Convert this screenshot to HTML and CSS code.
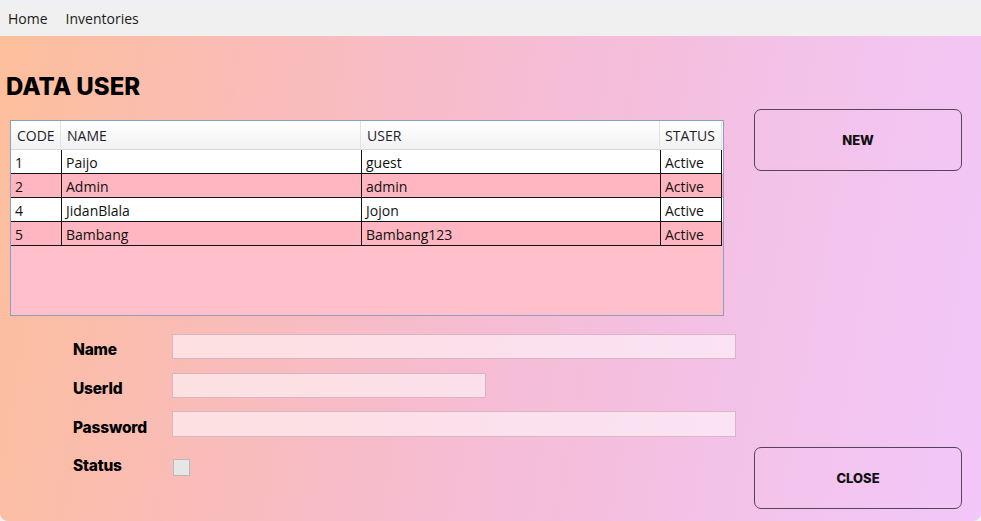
FILE: index.html
```html
<!DOCTYPE html>
<html>
<head>
<meta charset="utf-8">
<link rel="stylesheet" href="styles.css">
</head>
<body>
<div class="app">
  <nav class="menubar">
    <span class="menu-item">Home</span>
    <span class="menu-item">Inventories</span>
  </nav>
  <main class="window">
    <section class="left">
      <h1 class="title">DATA USER</h1>
      <div class="grid">
        <div class="grid-row header">
          <div class="cell c-code">CODE</div>
          <div class="cell c-name">NAME</div>
          <div class="cell c-user">USER</div>
          <div class="cell c-status">STATUS</div>
        </div>
        <div class="grid-row data">
          <div class="cell c-code">1</div>
          <div class="cell c-name">Paijo</div>
          <div class="cell c-user">guest</div>
          <div class="cell c-status">Active</div>
        </div>
        <div class="grid-row data alt">
          <div class="cell c-code">2</div>
          <div class="cell c-name">Admin</div>
          <div class="cell c-user">admin</div>
          <div class="cell c-status">Active</div>
        </div>
        <div class="grid-row data">
          <div class="cell c-code">4</div>
          <div class="cell c-name">JidanBlala</div>
          <div class="cell c-user">Jojon</div>
          <div class="cell c-status">Active</div>
        </div>
        <div class="grid-row data alt">
          <div class="cell c-code">5</div>
          <div class="cell c-name">Bambang</div>
          <div class="cell c-user">Bambang123</div>
          <div class="cell c-status">Active</div>
        </div>
      </div>
      <form class="form">
        <label class="label">Name</label>
        <input class="field wide" type="text">
        <label class="label">UserId</label>
        <input class="field short" type="text">
        <label class="label">Password</label>
        <input class="field wide tall" type="password">
        <label class="label status-label">Status</label>
        <span class="check"></span>
      </form>
    </section>
    <aside class="right">
      <button class="btn" type="button">NEW</button>
      <button class="btn" type="button">CLOSE</button>
    </aside>
  </main>
</div>
</body>
</html>
```
FILE: styles.css
```css
* { box-sizing: border-box; }
html, body { margin: 0; padding: 0; }
body {
  background: #f0f0f0;
  width: 981px;
  height: 521px;
  overflow: hidden;
  font-family: "Open Sans", "Noto Sans", sans-serif;
}
.app { display: flex; flex-direction: column; height: 521px; }
.menubar {
  height: 36px;
  background: linear-gradient(#eef0f5 0, #eef0f5 5px, #f0f0f0 5px);
  display: flex;
  align-items: center;
  padding-left: 8px;
  gap: 18px;
  padding-top: 0;
}
.menu-item { font-size: 14px; color: #1b1b1b; }
.window {
  flex: 1;
  display: flex;
  border-radius: 0 0 8px 8px;
  background: linear-gradient(100deg, #fdbf9b 0%, #f9bcb8 25%, #f6bcd3 50%, #f3c2e8 75%, #f2c7f9 100%);
}
.left { width: 740px; display: flex; flex-direction: column; }
.title {
  margin: 36px 0 0 6px;
  font-family: "Inter", sans-serif;
  font-weight: 800;
  font-size: 24px;
  line-height: 30px;
  color: #000;
  letter-spacing: 0;
}
.grid {
  margin: 18px 0 0 10px;
  width: 714px;
  height: 196px;
  border: 1px solid #8a9fbf;
  background: #ffc0cb;
}
.grid-row { display: flex; }
.cell {
  font-size: 14px;
  color: #111;
  white-space: nowrap;
  overflow: hidden;
}
.c-code { width: 50px; }
.c-name { width: 300px; }
.c-user { width: 299px; }
.c-status { width: 62px; }
.header {
  height: 29px;
  background: linear-gradient(#ffffff, #f1f1f3);
}
.header .cell {
  line-height: 30px;
  padding-left: 6px;
  border-right: 1px solid #e2e2e5;
  border-bottom: 1px solid #d8d8dc;
  color: #1e1e28;
}
.header .c-code { padding-left: 6px; }
.header .c-status { padding-left: 5px; }
.data { height: 24px; background: #ffffff; width: 712px; }
.data.alt { background: #ffb6c1; }
.data .cell {
  line-height: 25px;
  padding-left: 4px;
  border-bottom: 1.5px solid #141414;
  border-left: 1.5px solid #141414;
}
.data .c-code { border-left: none; padding-left: 4px; }
.data .c-status { border-right: 1.5px solid #141414; width: 62px; }
.form {
  margin: 18px 0 0 73px;
  display: grid;
  grid-template-columns: 99px auto;
  grid-auto-rows: 25px;
  row-gap: 14px;
  align-items: center;
}
.label {
  font-family: "Inter", sans-serif;
  font-weight: 800;
  font-size: 15.5px;
  color: #000;
  letter-spacing: -0.2px;
  padding-top: 6px;
}
.field {
  height: 25px;
  border: 1px solid #d8b4c4;
  background: rgba(255, 248, 252, 0.6);
  outline: none;
  margin: 0;
}
.wide { width: 564px; }
.short { width: 314px; }
.tall { height: 26px; margin-top: -2px; }
.status-label { margin-top: -2px; }
.check {
  width: 17px;
  height: 17px;
  background: #e6e6e6;
  border: 1px solid #b8b8b8;
  margin: 7px 0 0 1px;
}
.right {
  flex: 1;
  display: flex;
  flex-direction: column;
  justify-content: space-between;
  padding: 73px 0 12px 14px;
}
.btn {
  width: 208px;
  height: 62px;
  border: 1.5px solid #56445a;
  border-radius: 7px;
  background: transparent;
  font-family: "Inter", sans-serif;
  font-weight: 800;
  font-size: 13px;
  color: #111;
  letter-spacing: 0;
  padding: 0;
}
```
